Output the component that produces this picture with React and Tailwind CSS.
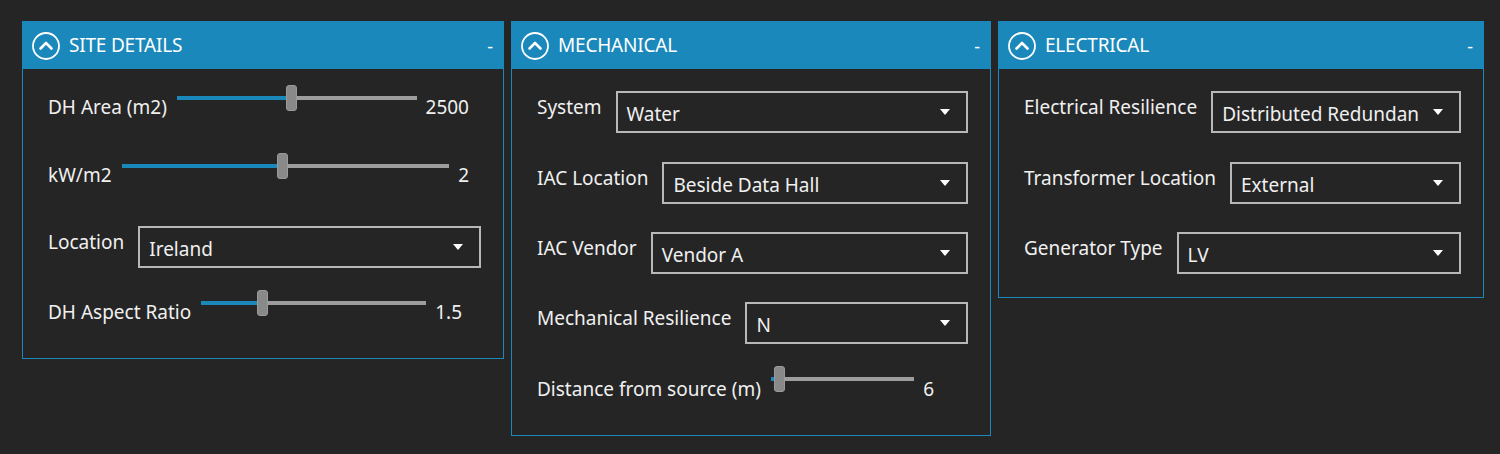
import React from 'react';

const Header = ({ title }) => (
  <div className="flex h-[47px] items-center bg-[#1a88bb] pl-[8px] pr-[10px] text-white">
    <svg width="30" height="30" viewBox="0 0 30 30" className="shrink-0">
      <circle cx="15" cy="15" r="13" fill="none" stroke="white" strokeWidth="1.8" />
      <path d="M9.5 17.5 L15 12 L20.5 17.5" fill="none" stroke="white" strokeWidth="2.6" strokeLinecap="round" strokeLinejoin="round" />
    </svg>
    <span className="ml-[8px] text-[19px] leading-none tracking-[-0.2px]">{title}</span>
    <span className="ml-auto text-[18px] leading-none">-</span>
  </div>
);

const Panel = ({ title, width, children, body }) => (
  <div className={`${width} shrink-0 border border-[#1a88bb]`}>
    <Header title={title} />
    <div className={body}>{children}</div>
  </div>
);

const Slider = ({ pct }) => (
  <div className="relative mt-px h-[26px] flex-1">
    <div className="absolute left-0 right-0 top-[11px] h-[4px] bg-[#9d9d9d]" />
    <div
      className="absolute left-0 top-[11px] h-[4px] bg-[#1a88bb]"
      style={{ width: `calc((100% - 11px) * ${pct})` }}
    />
    <div
      className="absolute top-0 h-[26px] w-[11px] rounded-[3px] border border-[#9a9a9a] bg-[#898989]"
      style={{ left: `calc((100% - 11px) * ${pct})` }}
    />
  </div>
);

const SliderRow = ({ label, value, pct, valueMr, className = '' }) => (
  <div className={`flex h-[42px] items-start ${className}`}>
    <span className="mt-[11px] leading-[24px]">{label}</span>
    <div className="ml-[10px] flex flex-1">
      <Slider pct={pct} />
    </div>
    <span className={`ml-[9px] mt-[11px] leading-[24px] ${valueMr}`}>{value}</span>
  </div>
);

const SelectRow = ({ label, value, className = '' }) => (
  <div className={`flex h-[42px] items-start ${className}`}>
    <span className="mt-[4px] whitespace-nowrap leading-[24px]">{label}</span>
    <div className="ml-[14px] flex h-[42px] min-w-0 flex-1 items-center border-2 border-[#b8b8b8] pl-[9px] pr-[16px]">
      <span className="mt-[3px] min-w-0 flex-1 whitespace-nowrap leading-[24px]">{value}</span>
      <svg width="10" height="6" viewBox="0 0 10 6" className="ml-2 shrink-0">
        <path d="M0 0 H10 L5 6 Z" fill="white" />
      </svg>
    </div>
  </div>
);

export default function App() {
  return (
    <div
      className="min-h-[454px] bg-[#252525] text-[19px] text-[#f0f0f0]"
      style={{ fontFamily: '"Noto Sans", "Open Sans", sans-serif' }}
    >
      <div className="flex items-start gap-[7px] pl-[22px] pt-[21px]">
        <Panel title="SITE DETAILS" width="w-[482px]" body="pl-[25px] pr-[22px] pt-[15px] pb-[27px]">
          <SliderRow label="DH Area (m2)" value="2500" pct={0.476} valueMr="mr-[12px]" />
          <SliderRow label="kW/m2" value="2" pct={0.49} valueMr="mr-[12px]" className="mt-[26px]" />
          <SelectRow label="Location" value="Ireland" className="mt-[32px]" />
          <SliderRow label="DH Aspect Ratio" value="1.5" pct={0.26} valueMr="mr-[19px]" className="mt-[21px]" />
        </Panel>

        <Panel title="MECHANICAL" width="w-[480px]" body="pl-[25px] pr-[22px] pt-[22px] pb-[28px]">
          <SelectRow label="System" value="Water" />
          <SelectRow label="IAC Location" value="Beside Data Hall" className="mt-[29px]" />
          <SelectRow label="IAC Vendor" value="Vendor A" className="mt-[28px]" />
          <SelectRow label="Mechanical Resilience" value="N" className="mt-[28px]" />
          <div className="mt-[21px] flex h-[42px] items-start">
            <span className="mt-[12px] leading-[24px]">Distance from source (m)</span>
            <div className="ml-[10px] flex flex-1">
              <Slider pct={0.02} />
            </div>
            <span className="ml-[9px] mr-[34px] mt-[12px] leading-[24px]">6</span>
          </div>
        </Panel>

        <Panel title="ELECTRICAL" width="w-[486px]" body="pl-[25px] pr-[22px] pt-[22px] pb-[23px]">
          <SelectRow label="Electrical Resilience" value="Distributed Redundan" />
          <SelectRow label="Transformer Location" value="External" className="mt-[29px]" />
          <SelectRow label="Generator Type" value="LV" className="mt-[28px]" />
        </Panel>
      </div>
    </div>
  );
}
